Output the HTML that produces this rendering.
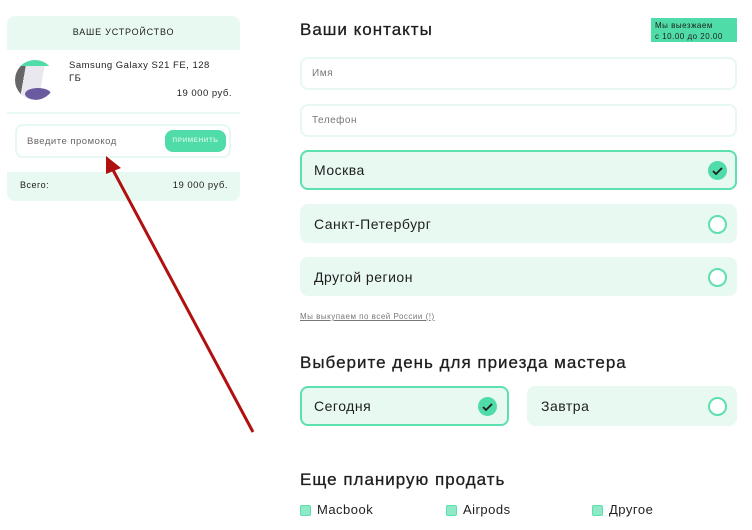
<!DOCTYPE html><html><head><meta charset="utf-8"><style>
*{box-sizing:border-box;margin:0;padding:0}
body{width:752px;height:530px;background:#fff;font-family:"Liberation Sans",sans-serif;color:#1e1e1e;position:relative;overflow:hidden;letter-spacing:.5px}
.a{position:absolute}
.card{left:7px;top:16px;width:233px;height:185px;border-radius:8px;background:#e8f9f2;overflow:hidden}
.in{border:2px solid #e6f8f0;border-radius:8px;background:#fff;font-size:10px;color:#777;padding-left:10px;display:flex;align-items:center}
.opt{border-radius:8px;background:#e8f9f2;font-size:14px;display:flex;align-items:center;padding-left:14px}
.sel{border:2px solid #5ce0ae;padding-left:12px}
.rc{position:absolute;right:10px;top:50%;margin-top:-9px;width:19px;height:19px;border-radius:50%;border:2px solid #5ce0ae;background:#fff}
.sel .rc{right:8px}
.ck{background:#4fdca8;border:none}
h2{position:absolute;font-size:17px;font-weight:normal;letter-spacing:1px;-webkit-text-stroke:.3px #1e1e1e}
.cb{width:11px;height:11px;border-radius:2px;background:#8ee9c6;border:1px solid #5ce0ae;display:inline-block;vertical-align:middle;margin-right:6px}
.lb{font-size:13px;top:502px}
</style></head><body>
<div class="a card">
 <div style="height:34px;text-align:center;font-size:9px;line-height:32px;letter-spacing:.8px">ВАШЕ УСТРОЙСТВО</div>
 <div style="position:absolute;top:34px;left:0;width:233px;height:62px;background:#fff"></div>
 <div style="position:absolute;top:98px;left:0;width:233px;height:58px;background:#fff"></div>
 <div style="position:absolute;left:8px;top:44px;width:40px;height:40px;border-radius:50%;background:linear-gradient(100deg,#666 0 25%,#e8e8ee 25% 65%,#fff 65%);overflow:hidden"><div style="height:6px;background:#4fdca8"></div><div style="position:absolute;left:10px;bottom:0;width:26px;height:12px;border-radius:50%;background:#6a5aa0"></div></div>
 <div style="position:absolute;left:62px;top:43px;font-size:9.5px;line-height:13px">Samsung Galaxy S21 FE, 128<br>ГБ</div>
 <div style="position:absolute;right:8px;top:72px;font-size:9.5px">19 000 руб.</div>
 <div class="in" style="position:absolute;left:8px;top:108px;width:216px;height:34px;font-size:9.5px;color:#666">Введите промокод</div>
 <div style="position:absolute;left:158px;top:114px;width:61px;height:22px;border-radius:8px;background:#4fdca8;color:#c8f5e3;font-size:6.5px;font-weight:bold;text-align:center;line-height:22px">ПРИМЕНИТЬ</div>
 <div style="position:absolute;left:13px;top:164px;font-size:9px">Всего:</div>
 <div style="position:absolute;right:12px;top:164px;font-size:9.5px">19 000 руб.</div>
</div>
<h2 style="left:300px;top:20px">Ваши контакты</h2>
<div class="a" style="left:651px;top:18px;width:86px;height:24px;background:#4fdca8;font-size:8px;line-height:11px;padding:2px 4px">Мы выезжаем<br>с 10.00 до 20.00</div>
<div class="a in" style="left:300px;top:57px;width:437px;height:33px">Имя</div>
<div class="a in" style="left:300px;top:104px;width:437px;height:33px">Телефон</div>
<div class="a opt sel" style="left:300px;top:150px;width:437px;height:40px">Москва<div class="rc ck"><svg width="19" height="19"><path d="M5 10l3 3 6-6" stroke="#1e1e1e" stroke-width="1.8" fill="none"/></svg></div></div>
<div class="a opt" style="left:300px;top:204px;width:437px;height:39px">Санкт-Петербург<div class="rc"></div></div>
<div class="a opt" style="left:300px;top:257px;width:437px;height:39px">Другой регион<div class="rc"></div></div>
<div class="a" style="left:300px;top:312px;font-size:8px;color:#777;text-decoration:underline">Мы выкупаем по всей России (!)</div>
<h2 style="left:300px;top:353px">Выберите день для приезда мастера</h2>
<div class="a opt sel" style="left:300px;top:386px;width:209px;height:40px">Сегодня<div class="rc ck" style="right:10px"><svg width="19" height="19"><path d="M5 10l3 3 6-6" stroke="#1e1e1e" stroke-width="1.8" fill="none"/></svg></div></div>
<div class="a opt" style="left:527px;top:386px;width:210px;height:40px">Завтра<div class="rc"></div></div>
<h2 style="left:300px;top:470px">Еще планирую продать</h2>
<div class="a lb" style="left:300px"><span class="cb"></span>Macbook</div>
<div class="a lb" style="left:446px"><span class="cb"></span>Airpods</div>
<div class="a lb" style="left:592px"><span class="cb"></span>Другое</div>
<svg class="a" style="left:0;top:0" width="752" height="530"><line x1="253" y1="432" x2="113" y2="170" stroke="#b01010" stroke-width="3"/><path d="M106 156 L121 168 L106 174 Z" fill="#b01010"/></svg>
</body></html>
